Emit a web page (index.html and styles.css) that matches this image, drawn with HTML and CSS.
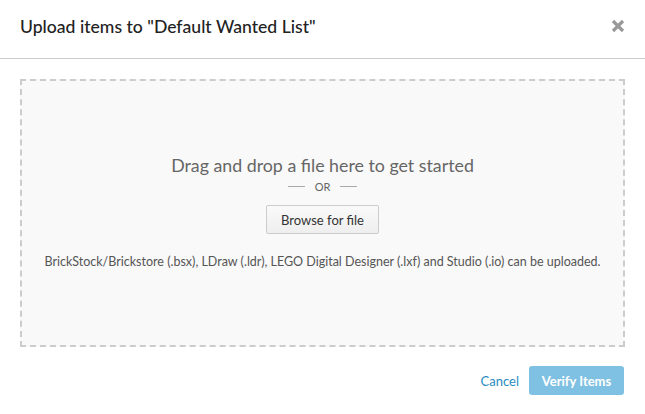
FILE: index.html
```html
<!DOCTYPE html>
<html lang="en">

<head>
    <meta charset="UTF-8">
    <meta name="viewport" content="width=device-width, initial-scale=1.0">
    <title>Upload items</title>
    <link rel="stylesheet" href="styles.css">
</head>

<body>
    <div class="modal">
        <div class="modal-header">
            <h2 class="modal-title">Upload items to "Default Wanted List"</h2>
            <!-- close icon -->
            <svg class="close" width="14" height="14" viewBox="0 0 14 14">
                <path d="M2 2 L12 12 M12 2 L2 12" stroke="#999" stroke-width="3.2" stroke-linecap="butt" />
            </svg>
        </div>

        <div class="modal-body">
            <div class="dropzone">
                <p class="drop-text">Drag and drop a file here to get started</p>
                <div class="or">OR</div>
                <button class="browse">Browse for file</button>
                <p class="formats">BrickStock/Brickstore (.bsx), LDraw (.ldr), LEGO Digital Designer (.lxf) and Studio (.io) can be uploaded.</p>
            </div>
        </div>

        <div class="modal-footer">
            <a class="cancel" href="#">Cancel</a>
            <button class="verify">Verify Items</button>
        </div>
    </div>
</body>

</html>
```

FILE: styles.css
```css
html,
body {
    margin: 0;
    padding: 0;
    background: #fff;
    font-family: Lato, "Open Sans", sans-serif;
}

.modal {
    width: 645px;
    height: 414px;
    display: flex;
    flex-direction: column;
}

.modal-header {
    height: 58px;
    border-bottom: 1px solid #ccc;
    display: flex;
    align-items: center;
    justify-content: space-between;
    padding: 0 20px;
}

.modal-title {
    margin: 0;
    font-size: 17.6px;
    font-weight: 500;
    color: #222;
    padding-bottom: 5px;
}

.close {
    margin-right: 0;
    margin-bottom: 6px;
}

.modal-body {
    padding: 20px 20px 0;
}

.dropzone {
    border: 2px dashed #ccc;
    background: #f9f9f9;
    display: flex;
    flex-direction: column;
    align-items: center;
    padding-top: 73px;
    height: 191px;
}

.drop-text {
    margin: 0;
    font-size: 17.8px;
    color: #666;
    line-height: 22px;
}

.or {
    display: flex;
    align-items: center;
    gap: 10px;
    font-size: 11px;
    color: #666;
    margin-top: 4px;
}

.or::before,
.or::after {
    content: "";
    width: 17px;
    border-top: 1px solid #aaa;
}

.browse {
    margin-top: 12px;
    height: 29px;
    padding: 0 14px;
    font-family: inherit;
    font-size: 13px;
    color: #333;
    background: linear-gradient(#fafafa, #eee);
    border: 1px solid #ccc;
    border-radius: 2px;
}

.formats {
    margin: 20px 0 0;
    font-size: 12.5px;
    color: #555;
}

.modal-footer {
    display: flex;
    justify-content: flex-end;
    align-items: center;
    gap: 10px;
    padding: 19px 21px 0;
}

.cancel {
    color: #2a8bbf;
    font-size: 13px;
    text-decoration: none;
}

.verify {
    height: 29px;
    width: 95px;
    background: #7fc1e2;
    color: #fff;
    font-family: inherit;
    font-weight: bold;
    font-size: 13px;
    border: none;
    border-radius: 3px;
}
```
